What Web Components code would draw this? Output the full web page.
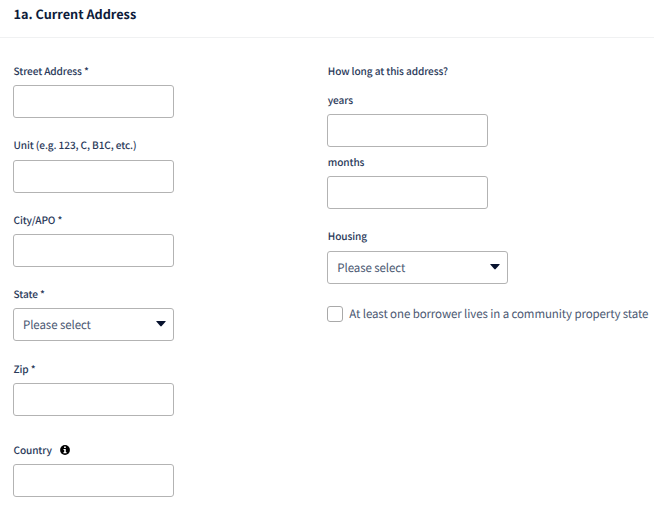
<!DOCTYPE html>
<html lang="en">
<head>
<meta charset="utf-8">
<title>Current Address</title>
<style>
  body {
    margin: 0;
    background: #fff;
    color: #2b3a5a;
    font-family: "Noto Sans CJK SC", "Noto Sans", sans-serif;
    text-rendering: geometricPrecision;
  }
</style>
</head>
<body>
<address-section>
  <span slot="title">1a. Current Address</span>

  <form-column>
    <text-field>Street Address *</text-field>
    <text-field>Unit (e.g. 123, C, B1C, etc.)</text-field>
    <text-field>City/APO *</text-field>
    <select-field value="Please select">State *</select-field>
    <text-field>Zip *</text-field>
    <text-field style="margin-top: 7px">Country<info-icon></info-icon></text-field>
  </form-column>

  <form-column>
    <duration-field>
      How long at this address?
      <text-field slot="fields">years</text-field>
      <text-field slot="fields">months</text-field>
    </duration-field>
    <select-field value="Please select" style="--width: 181px">Housing</select-field>
    <check-field>At least one borrower lives in a community property state</check-field>
  </form-column>
</address-section>

<script>
class AddressSection extends HTMLElement {
  constructor() {
    super();
    this.attachShadow({ mode: "open" });
    this.shadowRoot.innerHTML = `
    <style>
      :host {
        display: block;
      }

      header {
        box-sizing: border-box;
        height: 38px;
        padding: 4px 0 0 13.5px;
        border-bottom: 1px solid #f0f1f2;
      }

      h2 {
        margin: 0;
        color: #0d1b3a;
        font-size: 12.7px;
        font-weight: 700;
        line-height: 20px;
        white-space: nowrap;
      }

      main {
        display: grid;
        grid-template-columns: 314.3px 1fr;
        padding: 24px 0 0 13px;
      }
    </style>
    <header><h2><slot name="title"></slot></h2></header>
    <main><slot></slot></main>
  `;
  }
}

class FormColumn extends HTMLElement {
  constructor() {
    super();
    this.attachShadow({ mode: "open" });
    this.shadowRoot.innerHTML = `
    <style>
      :host {
        display: flex;
        flex-direction: column;
        align-items: flex-start;
        gap: 18.1px;
      }
    </style>
    <slot></slot>
  `;
  }
}

// label row and box shared by the text and select fields
const fieldStyles = `
  :host {
    display: flex;
    flex-direction: column;
    gap: 5.3px;
  }

  label {
    display: flex;
    align-items: center;
    height: 18px;
    padding-left: 0.5px;
    font-size: 10.1px;
    font-weight: 500;
    letter-spacing: -0.11px;
    line-height: 18px;
    white-space: nowrap;
  }

  .box {
    box-sizing: border-box;
    width: var(--width, 161px);
    height: 33px;
    margin: 0;
    border: 1px solid #b3b3b3;
    border-radius: 3px;
    background: #fff;
    outline: none;
  }
`;

class TextField extends HTMLElement {
  constructor() {
    super();
    this.attachShadow({ mode: "open" });
    this.shadowRoot.innerHTML = `
    <style>${fieldStyles}</style>
    <label for="input"><slot></slot></label>
    <input id="input" class="box" type="text">
  `;
  }
}

class SelectField extends HTMLElement {
  constructor() {
    super();
    this.attachShadow({ mode: "open" });
    this.shadowRoot.innerHTML = `
    <style>
      ${fieldStyles}

      button {
        display: flex;
        align-items: center;
        justify-content: space-between;
        padding: 0 7px 0 9px;
        color: #4b5872;
        font-family: inherit;
        font-size: 11.5px;
        letter-spacing: -0.09px;
        line-height: 20px;
        text-rendering: inherit;
      }

      span {
        padding-top: 1px;
      }

      svg {
        display: block;
        width: 10px;
        height: 6px;
        margin-bottom: 1px;
        fill: #07122e;
      }
    </style>
    <label><slot></slot></label>
    <button class="box" type="button">
      <span></span>
      <svg viewBox="0 0 10 6"><path d="M0.8 0h8.4q1 0 .3 .8L5.7 5.1q-.7 .7-1.4 0L.5 .8Q-.2 0 .8 0z"/></svg>
    </button>
  `;
    this.valueText = this.shadowRoot.querySelector("span");
  }

  connectedCallback() {
    this.valueText.textContent = this.getAttribute("value");
  }
}

class DurationField extends HTMLElement {
  constructor() {
    super();
    this.attachShadow({ mode: "open" });
    this.shadowRoot.innerHTML = `
    <style>
      :host {
        display: block;
      }

      .caption {
        padding-left: 0.5px;
        font-size: 10.1px;
        font-weight: 500;
        letter-spacing: -0.11px;
        line-height: 18px;
        white-space: nowrap;
      }

      .fields {
        display: flex;
        flex-direction: column;
        gap: 5.7px;
        margin-top: 11px;
      }
    </style>
    <div class="caption"><slot></slot></div>
    <div class="fields"><slot name="fields"></slot></div>
  `;
  }
}

class CheckField extends HTMLElement {
  constructor() {
    super();
    this.attachShadow({ mode: "open" });
    this.shadowRoot.innerHTML = `
    <style>
      :host {
        display: block;
        margin-top: 1.8px;
      }

      label {
        display: flex;
        align-items: center;
        gap: 6px;
        height: 20px;
        color: #4b5872;
        font-size: 11.5px;
        letter-spacing: -0.1px;
        line-height: 20px;
        white-space: nowrap;
      }

      span {
        padding-top: 1px;
      }

      input {
        appearance: none;
        box-sizing: border-box;
        flex: none;
        width: 16px;
        height: 16px;
        margin: 0;
        border: 1px solid #a9a9a9;
        border-radius: 3px;
        background: #fff;
      }
    </style>
    <label><input type="checkbox"><span><slot></slot></span></label>
  `;
  }
}

class InfoIcon extends HTMLElement {
  constructor() {
    super();
    this.attachShadow({ mode: "open" });
    this.shadowRoot.innerHTML = `
    <style>
      :host {
        display: block;
        margin-left: 8.5px;
      }

      svg {
        display: block;
        width: 10px;
        height: 10px;
      }
    </style>
    <svg viewBox="0 0 10 10">
      <circle cx="5" cy="5" r="4.9" fill="#000"/>
      <path d="M4.1 1.5h1.7v1.5H4.1zM3.5 3.9h2.3v3.2h.7v1.1h-3V7.1h.7V5h-.7z" fill="#fff"/>
    </svg>
  `;
  }
}

customElements.define("address-section", AddressSection);
customElements.define("form-column", FormColumn);
customElements.define("text-field", TextField);
customElements.define("select-field", SelectField);
customElements.define("duration-field", DurationField);
customElements.define("check-field", CheckField);
customElements.define("info-icon", InfoIcon);
</script>
</body>
</html>
